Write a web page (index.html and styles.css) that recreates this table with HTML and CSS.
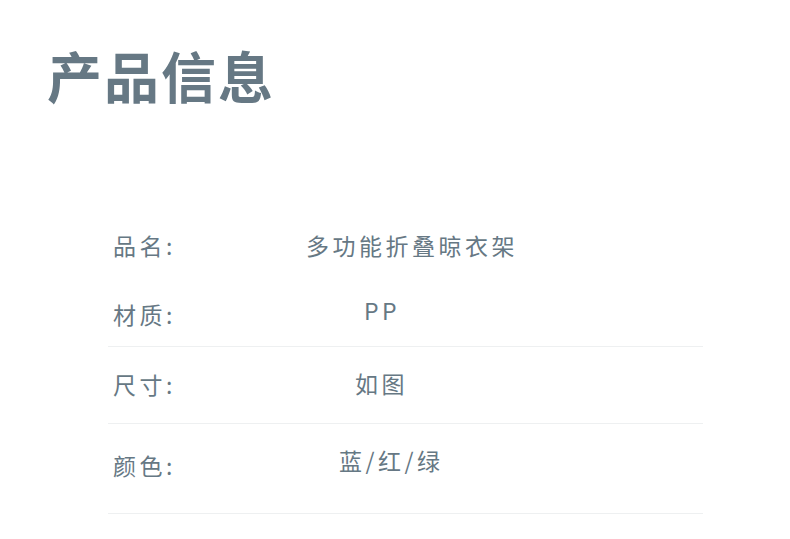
FILE: index.html
```html
<!DOCTYPE html>
<html lang="zh-CN">
<head>
<meta charset="utf-8">
<link rel="stylesheet" href="styles.css">
</head>
<body>
<div class="page">
  <h1 class="title">产品信息</h1>
  <div class="table">
    <div class="row row-name">
      <span class="label">品名:</span>
      <span class="value v-name">多功能折叠晾衣架</span>
    </div>
    <div class="row row-mat line">
      <span class="label">材质:</span>
      <span class="value v-mat">PP</span>
    </div>
    <div class="row row-size line">
      <span class="label">尺寸:</span>
      <span class="value v-size">如图</span>
    </div>
    <div class="row row-color line">
      <span class="label">颜色:</span>
      <span class="value v-color">蓝/红/绿</span>
    </div>
  </div>
</div>
</body>
</html>
```

FILE: styles.css
```css
html, body {
  margin: 0;
  padding: 0;
  background: #ffffff;
}
.page {
  width: 790px;
  height: 539px;
  overflow: hidden;
  font-family: "Noto Sans CJK SC", "Noto Sans", sans-serif;
  color: #667884;
}
.title {
  margin: 0;
  padding: 34px 0 0 47px;
  height: 80px;
  font-size: 55px;
  line-height: 80px;
  font-weight: 700;
  letter-spacing: 2px;
  color: #667884;
}
.table {
  margin: 96px 0 0 108px;
  width: 595px;
  display: flex;
  flex-direction: column;
}
.row {
  display: flex;
  align-items: center;
  font-size: 23px;
  letter-spacing: 3.5px;
  font-weight: 400;
}
.line {
  border-bottom: 1px solid #eef0f1;
}
.label {
  width: 190px;
  padding-left: 5px;
  flex: none;
}
.row-name { height: 70px; }
.row-mat { height: 66px; }
.row-size { height: 76px; }
.row-color { height: 89px; }
.v-name { margin-left: 3px; }
.v-mat { margin-left: 61px; margin-top: -6px; }
.v-size { margin-left: 52px; margin-top: -4px; }
.v-color { margin-left: 36px; margin-top: -17px; }
.row-mat .label { margin-top: 2px; }
.row-size .label { margin-top: -2px; }
.row-color .label { margin-top: -7px; }
```
